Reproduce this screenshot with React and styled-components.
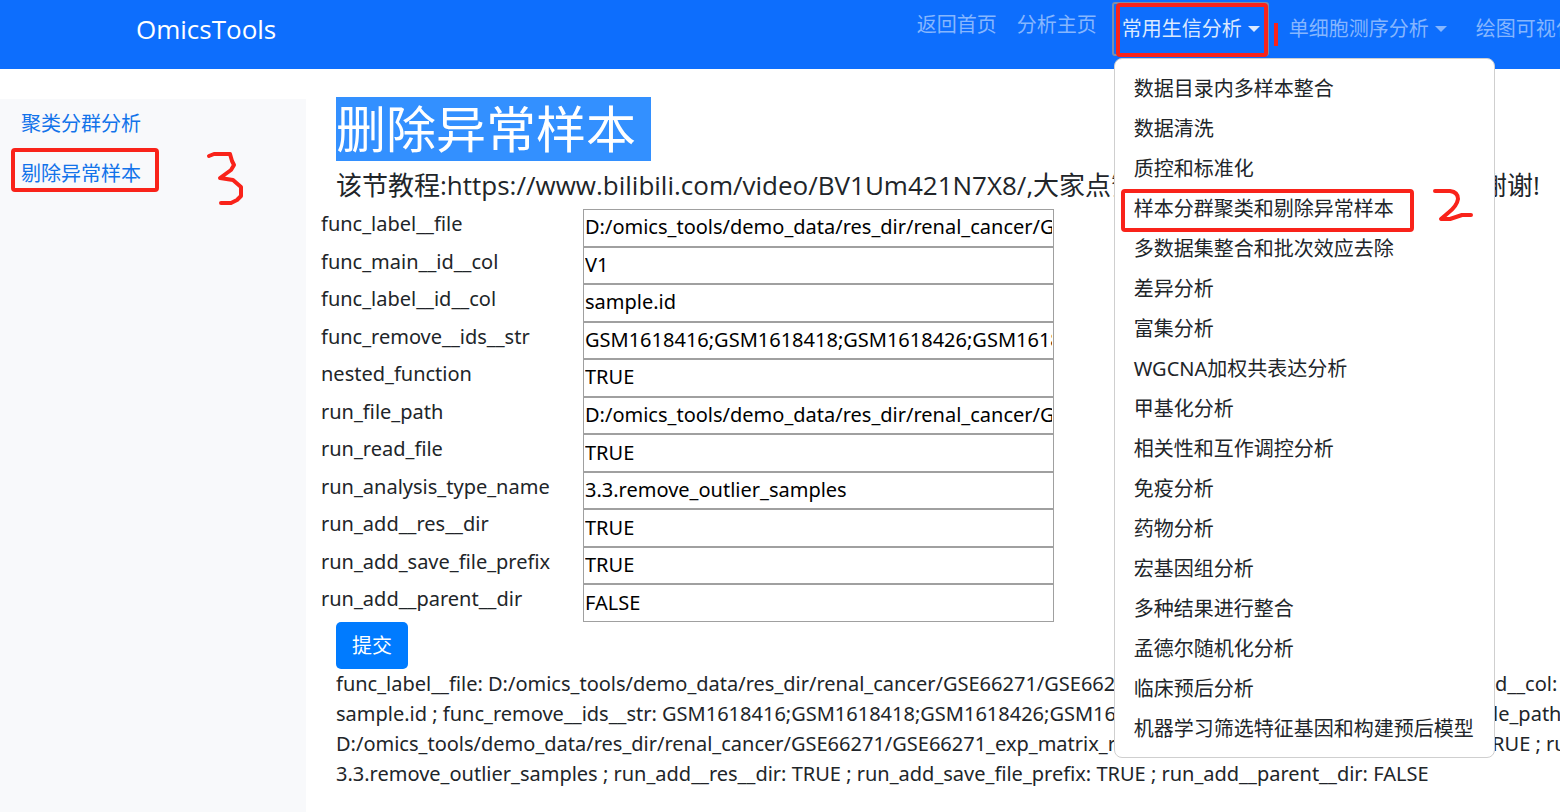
import React, { useState } from 'react';
import styled, { createGlobalStyle, css } from 'styled-components';

const GlobalStyle = createGlobalStyle`
  * { box-sizing: border-box; }
  body {
    margin: 0;
    background: #fff;
    color: #212529;
    font-family: "Noto Sans", "Noto Sans CJK SC", sans-serif;
    font-size: 20px;
    line-height: 30px;
    overflow: hidden;
  }
`;

const red = '#f9231a';

const Page = styled.div`
  min-height: 100vh;
  display: flex;
  flex-direction: column;
  overflow: hidden;
`;

const Header = styled.header`
  display: grid;
  grid-template-columns: minmax(0, 6fr) minmax(0, 5fr);
  height: 69px;
  padding-left: 136px;
  background: #0d6efd;
`;

const Brand = styled.a`
  justify-self: start;
  font-family: "Open Sans", sans-serif;
  font-size: 26px;
  line-height: 58px;
  color: #fff;
  text-decoration: none;
`;

const Nav = styled.nav`
  display: flex;
  align-items: flex-start;
  gap: 12px;
  padding-top: 3px;
`;

const navText = css`
  flex: none;
  font: inherit;
  white-space: nowrap;
  color: ${(p) => (p.$active ? '#dbe9ff' : '#86b6fe')};
`;

const NavLink = styled.a`
  ${navText}
  padding: 0 4px;
  line-height: 44px;
  text-decoration: none;
`;

const Dropdown = styled.div`
  position: relative;
  flex: none;
`;

const Toggle = styled.button`
  ${navText}
  display: flex;
  align-items: center;
  gap: 6px;
  height: 52px;
  padding: 0 8px 0 9px;
  border: 0;
  border-radius: 2px;
  background: none;
  outline: ${(p) => (p.$active ? '2px solid #7f8ea6' : 'none')};
  outline-offset: -1px;

  &::after {
    content: "";
    border: 6px solid transparent;
    border-top-color: currentColor;
    border-bottom: 0;
  }
`;

const Menu = styled.ul`
  position: absolute;
  z-index: 2;
  top: 55px;
  left: 1px;
  width: 381px;
  margin: 0;
  padding: 10px 0 8px;
  list-style: none;
  background: #fff;
  border: 1px solid #cfcfcf;
  border-radius: 8px;
`;

const MenuItem = styled.li`
  position: relative;
`;

const MenuLink = styled.a`
  display: block;
  padding: 0 19px;
  line-height: 40px;
  white-space: nowrap;
  color: #212529;
  text-decoration: none;
`;

const Frame = styled.span`
  position: absolute;
  z-index: 3;
  inset: ${(p) => p.$inset};
  border: 4px solid ${red};
  border-radius: 4px;
  pointer-events: none;
`;

const Mark = styled.svg`
  position: absolute;
  z-index: 3;
  left: ${(p) => p.$left};
  top: ${(p) => p.$top};
  fill: none;
  stroke: ${red};
  stroke-width: 4;
  stroke-linecap: round;
  stroke-linejoin: round;
  pointer-events: none;
`;

const Body = styled.div`
  flex: 1;
  display: flex;
`;

const Sidebar = styled.aside`
  flex: 0 0 306px;
  display: flex;
  flex-direction: column;
  align-items: flex-start;
  margin-top: 30px;
  padding-left: 21px;
  background: #f8f9fb;
`;

const SideItem = styled.div`
  position: relative;
`;

const SideLink = styled.a`
  display: block;
  line-height: 50px;
  color: #1273ea;
  text-decoration: none;
`;

const Main = styled.main`
  flex: 1;
  min-width: 0;
  padding: 28px 0 24px 15px;
`;

const Indented = styled.div`
  padding-left: 15px;
`;

const Title = styled.h1`
  width: fit-content;
  margin: 0;
  padding-right: 15px;
  font-size: 50px;
  line-height: 64px;
  font-weight: 400;
  color: #fff;
  background: #3390ff;
`;

const Line = styled.div`
  display: flex;
  white-space: nowrap;
`;

const Tagline = styled(Line)`
  font-family: "Open Sans", "Noto Sans CJK SC", sans-serif;
  font-size: 26px;
  line-height: 48px;
`;

const Lead = styled.span`
  flex: 1;
  min-width: 0;
  overflow: hidden;
`;

const Tail = styled.span`
  flex: 0 0 79px;
  overflow: hidden;
`;

const Fields = styled.div`
  display: grid;
  grid-auto-rows: 1fr;
  height: 413px;
`;

const Field = styled.div`
  display: grid;
  grid-template-columns: 262px minmax(0, 471px);
`;

const Input = styled.input`
  width: 100%;
  height: 100%;
  padding: 0 1px 2px;
  border: 1px solid #a0a0a0;
  border-radius: 0;
  background: #fff;
  color: #000;
  font: inherit;
`;

const Submit = styled.button`
  display: block;
  height: 47px;
  padding: 0 16px;
  border: 0;
  border-radius: 5px;
  background: #007bff;
  color: #fff;
  font: inherit;
`;

const menuItems = [
  '数据目录内多样本整合',
  '数据清洗',
  '质控和标准化',
  '样本分群聚类和剔除异常样本',
  '多数据集整合和批次效应去除',
  '差异分析',
  '富集分析',
  'WGCNA加权共表达分析',
  '甲基化分析',
  '相关性和互作调控分析',
  '免疫分析',
  '药物分析',
  '宏基因组分析',
  '多种结果进行整合',
  '孟德尔随机化分析',
  '临床预后分析',
  '机器学习筛选特征基因和构建预后模型',
];

const initialFields = [
  ['func_label__file', 'D:/omics_tools/demo_data/res_dir/renal_cancer/GSE66271/GSE66271_group.csv'],
  ['func_main__id__col', 'V1'],
  ['func_label__id__col', 'sample.id'],
  ['func_remove__ids__str', 'GSM1618416;GSM1618418;GSM1618426;GSM1618428'],
  ['nested_function', 'TRUE'],
  ['run_file_path', 'D:/omics_tools/demo_data/res_dir/renal_cancer/GSE66271/GSE66271_exp_matrix_raw.csv'],
  ['run_read_file', 'TRUE'],
  ['run_analysis_type_name', '3.3.remove_outlier_samples'],
  ['run_add__res__dir', 'TRUE'],
  ['run_add_save_file_prefix', 'TRUE'],
  ['run_add__parent__dir', 'FALSE'],
];

const summary = [
  ['func_label__file: D:/omics_tools/demo_data/res_dir/renal_cancer/GSE66271/GSE66271_group.csv ; func_label', '_id__col:'],
  ['sample.id ; func_remove__ids__str: GSM1618416;GSM1618418;GSM1618426;GSM1618428 ; nested_function: TRUE ; run_', 'file_path:'],
  ['D:/omics_tools/demo_data/res_dir/renal_cancer/GSE66271/GSE66271_exp_matrix_raw.csv ; run_read_file: ', 'TRUE ; run_analysis_type_name:'],
  ['3.3.remove_outlier_samples ; run_add__res__dir: TRUE ; run_add_save_file_prefix: TRUE ; run_add__parent__dir: FALSE'],
];

export default function App() {
  const [values, setValues] = useState(Object.fromEntries(initialFields));

  return (
    <Page>
      <GlobalStyle />
      <Header>
        <Brand href="#">OmicsTools</Brand>
        <Nav>
          <NavLink href="#">返回首页</NavLink>
          <NavLink href="#">分析主页</NavLink>
          <Dropdown>
            <Toggle type="button" $active aria-expanded="true">常用生信分析</Toggle>
            <Frame $inset="0 0 -2px 3px" />
            <Mark $left="161px" $top="18px" width="6" height="28" viewBox="0 0 6 28" aria-hidden="true">
              <path d="M2 2V25" strokeLinecap="butt" />
            </Mark>
            <Menu>
              {menuItems.map((item, i) => (
                <MenuItem key={item}>
                  <MenuLink href="#">{item}</MenuLink>
                  {i === 3 && (
                    <>
                      <Frame $inset="0 80px -3px 6px" />
                      <Mark $left="317px" $top="0" width="44" height="36" viewBox="1432 189 44 36" aria-hidden="true">
                        <path d="M1435 191H1450Q1458 192 1458 199Q1457 206 1448 213L1441 219H1450L1462 215L1471 215" />
                      </Mark>
                    </>
                  )}
                </MenuItem>
              ))}
            </Menu>
          </Dropdown>
          <Toggle type="button">单细胞测序分析</Toggle>
          <Toggle type="button">绘图可视化分析</Toggle>
        </Nav>
      </Header>
      <Body>
        <Sidebar>
          <SideItem>
            <SideLink href="#">聚类分群分析</SideLink>
          </SideItem>
          <SideItem>
            <SideLink href="#">剔除异常样本</SideLink>
            <Frame $inset="-1px -18px 7px -10px" />
            <Mark $left="184px" $top="0" width="44" height="60" viewBox="205 149 44 60" aria-hidden="true">
              <path d="M209 156L214 154H230L232 161L234 165L231 170L220 178L233 180L241 187V196L237 200L231 203H221" />
            </Mark>
          </SideItem>
        </Sidebar>
        <Main>
          <Indented>
            <Title>删除异常样本</Title>
            <Tagline>
              <Lead>该节教程:https://www.bilibili.com/video/BV1Um421N7X8/,大家点赞收藏关注转发支持一下作者吧,</Lead>
              <Tail>谢谢!</Tail>
            </Tagline>
          </Indented>
          <form onSubmit={(e) => e.preventDefault()}>
            <Fields>
              {initialFields.map(([name]) => (
                <Field key={name}>
                  <label htmlFor={name}>{name}</label>
                  <Input
                    id={name}
                    type="text"
                    value={values[name]}
                    onChange={(e) => setValues({ ...values, [name]: e.target.value })}
                  />
                </Field>
              ))}
            </Fields>
            <Indented>
              <Submit type="submit">提交</Submit>
            </Indented>
          </form>
          <Indented>
            {summary.map(([lead, tail]) => (
              <Line key={lead}>
                <Lead>{lead}</Lead>
                {tail && <Tail>{tail}</Tail>}
              </Line>
            ))}
          </Indented>
        </Main>
      </Body>
    </Page>
  );
}
